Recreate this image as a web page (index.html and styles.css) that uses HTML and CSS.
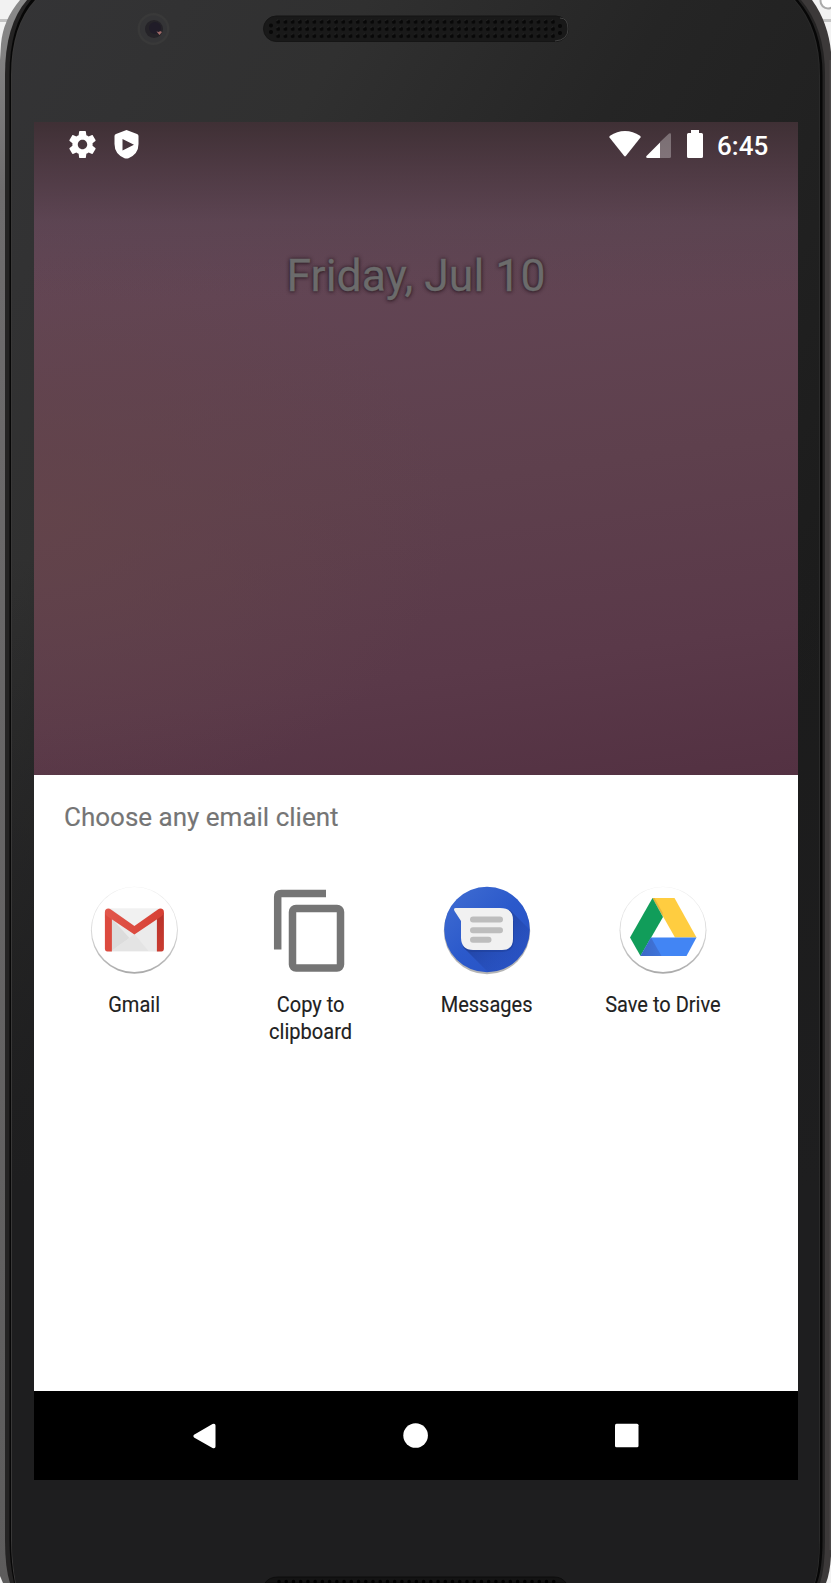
FILE: index.html
```html
<!DOCTYPE html>
<html lang="en">
<head>
<meta charset="utf-8">
<title>Choose any email client</title>
<link rel="stylesheet" href="styles.css">
</head>
<body>
<div class="device">
  <svg class="frame" viewBox="0 0 831 1583" aria-hidden="true">
    <defs>
      <linearGradient id="body" gradientUnits="userSpaceOnUse" x1="0" y1="0" x2="900" y2="540">
        <stop offset="0" stop-color="#343436"/><stop offset=".3" stop-color="#303030"/><stop offset=".55" stop-color="#252525"/><stop offset="1" stop-color="#1b1b1b"/>
      </linearGradient>
      <linearGradient id="lower" x1="0" y1="0" x2="0" y2="1">
        <stop offset=".35" stop-color="#1e1e1f" stop-opacity="0"/><stop offset=".75" stop-color="#1e1e1f"/>
      </linearGradient>
      <linearGradient id="silver" x1="0" y1="0" x2="0" y2="1">
        <stop offset="0" stop-color="#8a8a8a"/><stop offset=".12" stop-color="#6e6c6d"/><stop offset="1" stop-color="#5d5c5c"/>
      </linearGradient>
      <pattern id="holes" x="274.6" y="18.3" width="7.23" height="7.1" patternUnits="userSpaceOnUse">
        <circle cx="3.6" cy="3.5" r="2" fill="#080808"/><path d="M2.3 2.3l1-.7" stroke="#3b3b3b" stroke-width=".8"/>
      </pattern>
    </defs>
    <path fill="#f2f2f2" d="M0 0h831v1583H0z"/>
    <path fill="#c3c3c3" d="M0 19h20v3H0zM805 19h26v3h-26z"/>
    <circle cx="828" cy="1" r="7.5" fill="#fff" stroke="#aaa" stroke-width="2"/>
    <path fill="#3c3939" d="M400 0H812Q828 22 831 52V1556Q830 1573 826 1583H400z"/>
    <path fill="#4a4747" d="M829.5 60h1.500V1550h-1.500z"/>
    <path fill="url(#silver)" d="M400 0H20Q3 20 1 44L0 60V1576L3 1583H400z"/>
    <path fill="#242323" d="M27 0H801Q825 28 825 75V1540Q825 1568 820 1583H10Q5 1568 5 1540V75Q5 25 27 0z"/>
    <path fill="#070707" d="M31 0H798Q822.500 28 822.500 75V1540Q822.500 1568 817 1583H14Q9.500 1562 9.500 1540V75Q9.500 26 31 0z"/>
    <path fill="#393838" d="M35 0H600V1583H15Q11 1562 11 1540V75Q11 26 35 0z"/>
    <path fill="#2a2a2a" d="M600 0H795Q820 28 820 75V1540Q820 1568 815 1583H600z"/>
    <path fill="url(#body)" d="M36 0H794Q819 28 819 75V1540Q819 1568 814 1583H16Q12 1562 12 1540V75Q12 26 36 0z"/>
    <path fill="url(#lower)" d="M36 0H794Q819 28 819 75V1540Q819 1568 814 1583H16Q12 1562 12 1540V75Q12 26 36 0z"/>
    <circle cx="153.500" cy="29" r="16" fill="#393939"/>
    <circle cx="153.500" cy="29" r="13.500" fill="#343436"/>
    <circle cx="154" cy="29" r="9" fill="#252328"/>
    <circle cx="155" cy="28" r="6" fill="#201c28"/>
    <path d="M156.500 31.500l3 3.500 2.500-3-2-1-1 1z" fill="#a06a68"/>
    <rect x="263.500" y="16" width="305" height="25.500" rx="12.700" fill="#191919" stroke="#151515"/>
    <path d="M555 41q13-1 13-12t-8-11" fill="none" stroke="#464646" stroke-width=".9"/>
    <path fill="url(#holes)" d="M274.600 18.300H556.500V39.600H274.600z"/>
    <g fill="#080808"><circle cx="271" cy="25.500" r="2"/><circle cx="271" cy="32" r="2"/><circle cx="560" cy="26" r="2"/><circle cx="560" cy="33" r="2"/></g>
    <path d="M265 1583q4-6 13-6H554q8 0 12 6z" fill="#131313" stroke="#0d0d0d"/>
    <path d="M279 1581.500H555" stroke="#000" stroke-width="3.500" stroke-linecap="round" stroke-dasharray="0 7.230"/>
  </svg>

  <main class="screen">
    <section class="wallpaper">
      <header class="status">
        <svg class="gear" viewBox="2 2 20 20"><path fill="#fff" d="M19.430 12.980c.04-.32.07-.64.07-.98s-.03-.66-.07-.98l2.110-1.650c.19-.15.24-.42.12-.64l-2-3.460c-.12-.22-.39-.3-.61-.22l-2.490 1c-.52-.4-1.080-.73-1.690-.98l-.38-2.650C14.460 2.180 14.250 2 14 2h-4c-.25 0-.46.18-.49.42l-.38 2.650c-.61.25-1.170.59-1.690.98l-2.490-1c-.23-.09-.49 0-.61.22l-2 3.460c-.13.22-.07.49.12.64l2.110 1.650c-.04.32-.07.65-.07.98s.03.66.07.98l-2.110 1.650c-.19.15-.24.42-.12.64l2 3.460c.12.22.39.3.61.22l2.490-1c.52.4 1.080.73 1.690.98l.38 2.650c.03.24.24.42.49.42h4c.25 0 .46-.18.49-.42l.38-2.650c.61-.25 1.170-.59 1.690-.98l2.490 1c.23.09.49 0 .61-.22l2-3.460c.12-.22.07-.49-.12-.64l-2.110-1.650zM12 15.500c-1.930 0-3.500-1.570-3.500-3.500s1.570-3.500 3.500-3.500 3.500 1.570 3.500 3.500-1.570 3.500-3.500 3.500z"/></svg>
        <svg class="shield" viewBox="0 0 25 29"><path fill="#fff" fill-rule="evenodd" d="M12.500 0L23 4q1.500.5 1.500 2v8q0 10-10 14.200-2 .8-4 0Q.5 24 .5 14V6q0-1.500 1.500-2zM8.500 9v11.500L20 14.700z"/></svg>
        <span class="spacer"></span>
        <svg class="wifi" viewBox="0 0 32 26"><path fill="#fff" d="M.5 6.500Q0 5.500 1 4.700Q8 0 16 0t15 4.700q1 .8.500 1.800L17 24.800q-1 1.200-2 0z"/></svg>
        <svg class="signal" viewBox="0 0 25 25"><path fill="#fff" fill-opacity=".3" d="M25 1.500V23.500q0 1.500-1.500 1.500H14V9L23 .5q2-1 2 1z"/><path fill="#fff" d="M14 9.500V25H1.500Q-.5 24.500.5 23z"/></svg>
        <svg class="battery" viewBox="0 0 16 28"><path fill="#fff" d="M4 0h8v3h2.500Q16 3 16 4.500v22q0 1.500-1.500 1.500h-13Q0 28 0 26.500v-22Q0 3 1.500 3H4z"/></svg>
        <time class="clock">6:45</time>
      </header>
      <div class="date">Friday, Jul 10</div>
    </section>

    <section class="sheet">
      <h1 class="title">Choose any email client</h1>
      <div class="targets">
        <div class="target">
          <svg class="icon" viewBox="0.6 0 90 90">
            <defs><linearGradient id="rim" x1="0" y1="0" x2="0" y2="1"><stop offset="0" stop-color="#f0f0f0"/><stop offset=".5" stop-color="#d8d8d8"/><stop offset="1" stop-color="#aaa"/></linearGradient>
            <linearGradient id="mred" x1="0" y1="0" x2="1" y2="0"><stop offset="0" stop-color="#e2574c"/><stop offset="1" stop-color="#d63f33"/></linearGradient>
            <linearGradient id="side" x1="0" y1="0" x2="0" y2="1"><stop offset="0" stop-color="#b8322a"/><stop offset="1" stop-color="#c93b30"/></linearGradient></defs>
            <circle cx="45" cy="45.300" r="43.500" fill="url(#rim)"/><circle cx="45" cy="44.500" r="42.600" fill="#fff"/>
            <path fill="#ebebeb" d="M20 23.500h50v43H20z"/><path fill="#f1f1f1" d="M22 24h46L45 41z"/>
            <path fill="#dcdcdc" d="M22 33l18 20-18 13z"/><path fill="#e4e4e4" d="M40 53l5-4 14 17H22z"/>
            <path fill="#dc4a3f" d="M16 27l6.500 6v33.500H18q-2.500 0-2.500-3V27z"/>
            <path fill="url(#side)" d="M74.500 27L67.500 33v33.500h4.500q2.500 0 2.500-3z"/>
            <path fill="url(#mred)" d="M15.500 27q0-3.500 3.500-3.500 1.200 0 2.500 1L45 41l23.500-16.500q1.300-1 2.500-1 3.500 0 3.500 3.500 0 2.500-2 4L45 49.500 17.500 31q-2-1.500-2-4z"/>
          </svg>
          <span class="label">Gmail</span>
        </div>
        <div class="target">
          <svg class="icon" viewBox="0.5 0 90 90"><g fill="none" stroke="#757575" stroke-width="7.500"><path d="M12.200 64.500V12q0-3.500 3.500-3.500H60.500"/><rect x="27" y="23.500" width="48" height="59.500" rx="3.500"/></g></svg>
          <span class="label">Copy to<br>clipboard</span>
        </div>
        <div class="target">
          <svg class="icon" viewBox="0 0 90 90">
            <defs><linearGradient id="blue" x1="0" y1="0" x2="1" y2="1"><stop offset="0" stop-color="#416ed2"/><stop offset=".5" stop-color="#2b59cb"/><stop offset="1" stop-color="#2851c2"/></linearGradient>
            <linearGradient id="shade" x1="0" y1="0" x2="1" y2="1"><stop offset=".2" stop-color="#1b3688" stop-opacity=".8"/><stop offset=".9" stop-color="#2851c2" stop-opacity=".1"/></linearGradient>
            <clipPath id="disc"><circle cx="45" cy="44.500" r="42.800"/></clipPath></defs>
            <circle cx="45" cy="46" r="43.200" fill="#b5b5b5"/><circle cx="45" cy="44.500" r="42.800" fill="url(#blue)"/>
            <g clip-path="url(#disc)"><path fill="url(#shade)" d="M68 25L90 47V90H49L21 62z"/></g>
            <path fill="#1d3c93" opacity=".45" d="M20 37v18q0 12 11 12h29q12 0 12-12V36z"/>
            <path fill="#f1f1f1" d="M14 23H58q13 0 13 12v19q0 11-11 11H31q-11.500 0-12-12V36L12.500 26q-1.500-3 1.500-3z"/>
            <path stroke="#bdbdbd" stroke-width="6" stroke-linecap="round" d="M31 34.500h27M31 45.300h27M31 54.800h15.500"/>
          </svg>
          <span class="label">Messages</span>
        </div>
        <div class="target">
          <svg class="icon" viewBox="0 0 90 90">
            <defs><linearGradient id="drive" x1="0" y1="0" x2="1" y2="0"><stop offset="0" stop-color="#3c68c5"/><stop offset="1" stop-color="#3f75dc"/></linearGradient></defs>
            <circle cx="45" cy="45.300" r="43.500" fill="url(#rim)"/><circle cx="45" cy="44.500" r="42.600" fill="#fff"/>
            <path fill="#ffcd40" d="M34.500 13h22L78.500 52.500H57z"/><path fill="#e4b43a" d="M34.500 13l10.500 18.500-.5-4-8-14.500z"/>
            <path fill="#119d5a" d="M34.500 13l10.500 19L22.500 71 12 52.500z"/>
            <path fill="#4285f4" d="M33 52.500h45.500L68.500 71h-46z"/><path fill="url(#drive)" d="M33 52.500L43.500 71h-21z"/>
          </svg>
          <span class="label">Save to Drive</span>
        </div>
      </div>
    </section>

    <nav class="nav">
      <svg viewBox="0 0 26 26"><path fill="#fff" d="M2 11.800L20.500 1q3-1 3 1.500v21q0 2.500-3 1.500L2 14.400q-1.500-1.300 0-2.600z"/></svg>
      <svg viewBox="0 0 26 26"><circle cx="12.600" cy="12.500" r="12.300" fill="#fff"/></svg>
      <svg viewBox="0 0 26 26"><rect x="1" y=".8" width="23.500" height="23.500" rx="1.500" fill="#fff"/></svg>
    </nav>
  </main>
</div>
</body>
</html>
```
FILE: styles.css
```css
body {
  margin: 0;
  font-family: Roboto, "Liberation Sans", sans-serif;
}
svg { display: block; }
.device {
  position: relative;
  box-sizing: border-box;
  width: 831px;
  height: 1583px;
  padding: 122px 33px 103px 34px;
  overflow: hidden;
}
.frame {
  position: absolute;
  inset: 0;
  width: 831px;
  height: 1583px;
}
.screen {
  position: relative;
  display: flex;
  flex-direction: column;
  height: 1358px;
}
.wallpaper {
  height: 653px;
  background:
    linear-gradient(rgba(60, 46, 50, .92) 0, rgba(70, 53, 60, .7) 50px, rgba(80, 65, 74, .35) 100px, rgba(90, 70, 80, 0) 175px),
    radial-gradient(ellipse 420px 290px at 0 400px, rgba(99, 68, 74, .85), rgba(99, 68, 74, 0)),
    linear-gradient(172deg, #65485a 0, #624554 26%, #5e404d 55%, #5a3949 80%, #533142 100%);
}
.status {
  display: flex;
  align-items: flex-start;
  height: 44px;
  padding: 8px 29px 0 35px;
  box-sizing: border-box;
}
.gear { width: 27px; height: 27px; margin-top: 1px; }
.shield { width: 25px; height: 29px; margin-left: 18px; }
.spacer { flex: 1; }
.wifi { width: 32px; height: 26px; margin-top: 1px; }
.signal { width: 25px; height: 25px; margin: 3px 0 0 5px; }
.battery { width: 16px; height: 28px; margin: 0 0 0 16px; }
.clock {
  margin-left: 14.5px;
  width: 52px;
  color: #fff;
  font-size: 26px;
  font-weight: 500;
  line-height: 32px;
  white-space: nowrap;
}
.date {
  margin-top: 82px;
  color: #6b6b6b;
  font-size: 44.6px;
  line-height: 56px;
  text-align: center;
  text-shadow: 0 0 4px rgba(35, 20, 28, .9), 0 1px 3px rgba(35, 20, 28, .5);
  -webkit-text-stroke: .3px #6b6b6b;
}
.sheet {
  height: 616px;
  background: #fff;
}
.title {
  margin: 0;
  padding: 25px 30px 0;
  color: #757575;
  font-size: 26px;
  font-weight: 400;
  line-height: 34px;
  -webkit-text-stroke: .15px #757575;
}
.targets {
  display: grid;
  grid-template-columns: repeat(4, 176px);
  padding: 51px 0 0 12.500px;
}
.target {
  display: flex;
  flex-direction: column;
  align-items: center;
}
.icon { width: 90px; height: 90px; }
.label {
  margin-top: 16px;
  color: #212121;
  font-size: 22.5px;
  line-height: 26.5px;
  text-align: center;
  white-space: nowrap;
  transform: scaleX(.89);
  -webkit-text-stroke: .15px #212121;
}
.nav {
  display: flex;
  justify-content: space-between;
  align-items: center;
  box-sizing: border-box;
  height: 89px;
  padding: 0 158px;
  background: #000;
}
.nav svg { width: 26px; height: 26px; }
```
